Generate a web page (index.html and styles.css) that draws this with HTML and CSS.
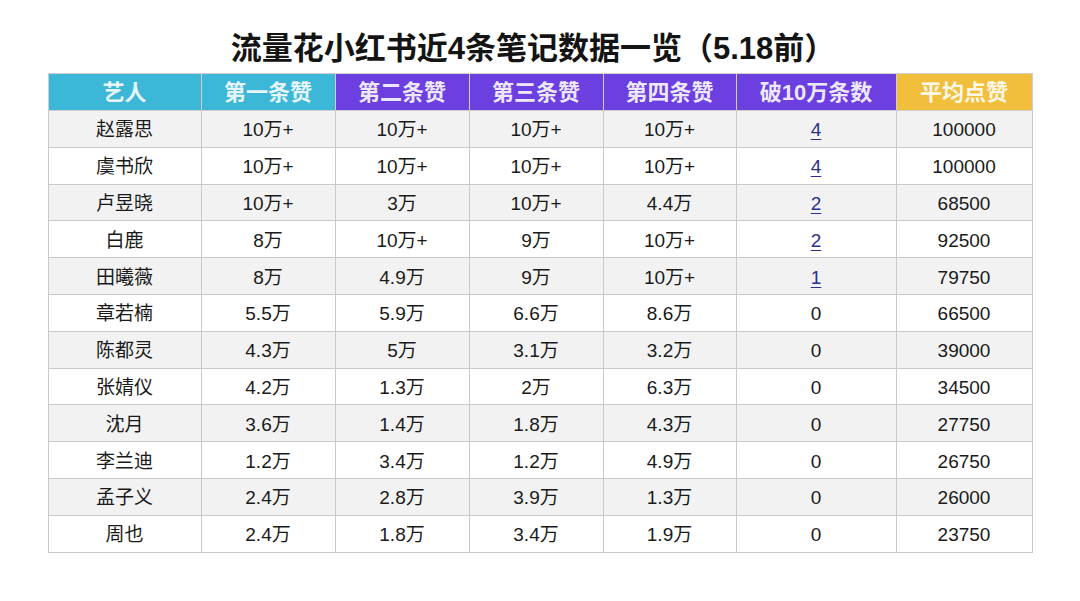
FILE: index.html
```html
<!DOCTYPE html>
<html lang="zh">
<head>
<meta charset="utf-8">
<link rel="stylesheet" href="styles.css">
</head>
<body>
<div class="page">
  <h1 class="title">流量花小红书近4条笔记数据一览（5.18前）</h1>
  <table class="data">
    <colgroup>
      <col class="c-name"><col class="c-n"><col class="c-n"><col class="c-n"><col class="c-n4"><col class="c-break"><col class="c-avg">
    </colgroup>
    <thead>
      <tr>
        <th class="h-cyan">艺人</th>
        <th class="h-cyan">第一条赞</th>
        <th class="h-purple">第二条赞</th>
        <th class="h-purple">第三条赞</th>
        <th class="h-purple">第四条赞</th>
        <th class="h-purple">破10万条数</th>
        <th class="h-yellow">平均点赞</th>
      </tr>
    </thead>
    <tbody>
      <tr><td>赵露思</td><td>10万+</td><td>10万+</td><td>10万+</td><td>10万+</td><td><span class="link">4</span></td><td>100000</td></tr>
      <tr><td>虞书欣</td><td>10万+</td><td>10万+</td><td>10万+</td><td>10万+</td><td><span class="link">4</span></td><td>100000</td></tr>
      <tr><td>卢昱晓</td><td>10万+</td><td>3万</td><td>10万+</td><td>4.4万</td><td><span class="link">2</span></td><td>68500</td></tr>
      <tr><td>白鹿</td><td>8万</td><td>10万+</td><td>9万</td><td>10万+</td><td><span class="link">2</span></td><td>92500</td></tr>
      <tr><td>田曦薇</td><td>8万</td><td>4.9万</td><td>9万</td><td>10万+</td><td><span class="link">1</span></td><td>79750</td></tr>
      <tr><td>章若楠</td><td>5.5万</td><td>5.9万</td><td>6.6万</td><td>8.6万</td><td>0</td><td>66500</td></tr>
      <tr><td>陈都灵</td><td>4.3万</td><td>5万</td><td>3.1万</td><td>3.2万</td><td>0</td><td>39000</td></tr>
      <tr><td>张婧仪</td><td>4.2万</td><td>1.3万</td><td>2万</td><td>6.3万</td><td>0</td><td>34500</td></tr>
      <tr><td>沈月</td><td>3.6万</td><td>1.4万</td><td>1.8万</td><td>4.3万</td><td>0</td><td>27750</td></tr>
      <tr><td>李兰迪</td><td>1.2万</td><td>3.4万</td><td>1.2万</td><td>4.9万</td><td>0</td><td>26750</td></tr>
      <tr><td>孟子义</td><td>2.4万</td><td>2.8万</td><td>3.9万</td><td>1.3万</td><td>0</td><td>26000</td></tr>
      <tr><td>周也</td><td>2.4万</td><td>1.8万</td><td>3.4万</td><td>1.9万</td><td>0</td><td>23750</td></tr>
    </tbody>
  </table>
</div>
</body>
</html>
```

FILE: styles.css
```css
html, body {
  margin: 0;
  padding: 0;
  background: #ffffff;
}
body {
  font-family: "Liberation Sans", "Noto Sans CJK SC", sans-serif;
  color: #1a1a1a;
}
.page {
  width: 1080px;
  height: 601px;
  padding-top: 29px;
  box-sizing: border-box;
}
.title {
  margin: 0 0 4px 0;
  padding-right: 14px;
  font-size: 31px;
  line-height: 40px;
  font-weight: 700;
  text-align: center;
  color: #141414;
}
.data {
  margin: 0 auto;
  width: 984px;
  border-collapse: collapse;
  table-layout: fixed;
}
.c-name { width: 153px; }
.c-n { width: 134px; }
.c-n4 { width: 133px; }
.c-break { width: 160px; }
.c-avg { width: 136px; }
.data th {
  height: 35px;
  padding: 1px 0 0 0;
  font-size: 22px;
  font-weight: 700;
  color: rgba(255, 255, 255, 0.9);
  border: 1px solid #cfcfcf;
  line-height: 1;
}
.h-cyan { background: #3db7d8; }
.h-purple { background: #6c3fe1; }
.h-yellow { background: #f2bf3d; }
.data td {
  height: 33.8px;
  padding: 2px 0 0 0;
  text-align: center;
  font-size: 19px;
  line-height: 1;
  border: 1px solid #c9c9c9;
  color: #1a1a1a;
}
.data tbody tr:nth-child(odd) td {
  background: #f2f2f2;
}
.data tbody tr:nth-child(even) td {
  background: #ffffff;
}
.link {
  color: #2b2f8f;
  text-decoration: underline;
  text-underline-offset: 3px;
  text-decoration-thickness: 1px;
}
```
